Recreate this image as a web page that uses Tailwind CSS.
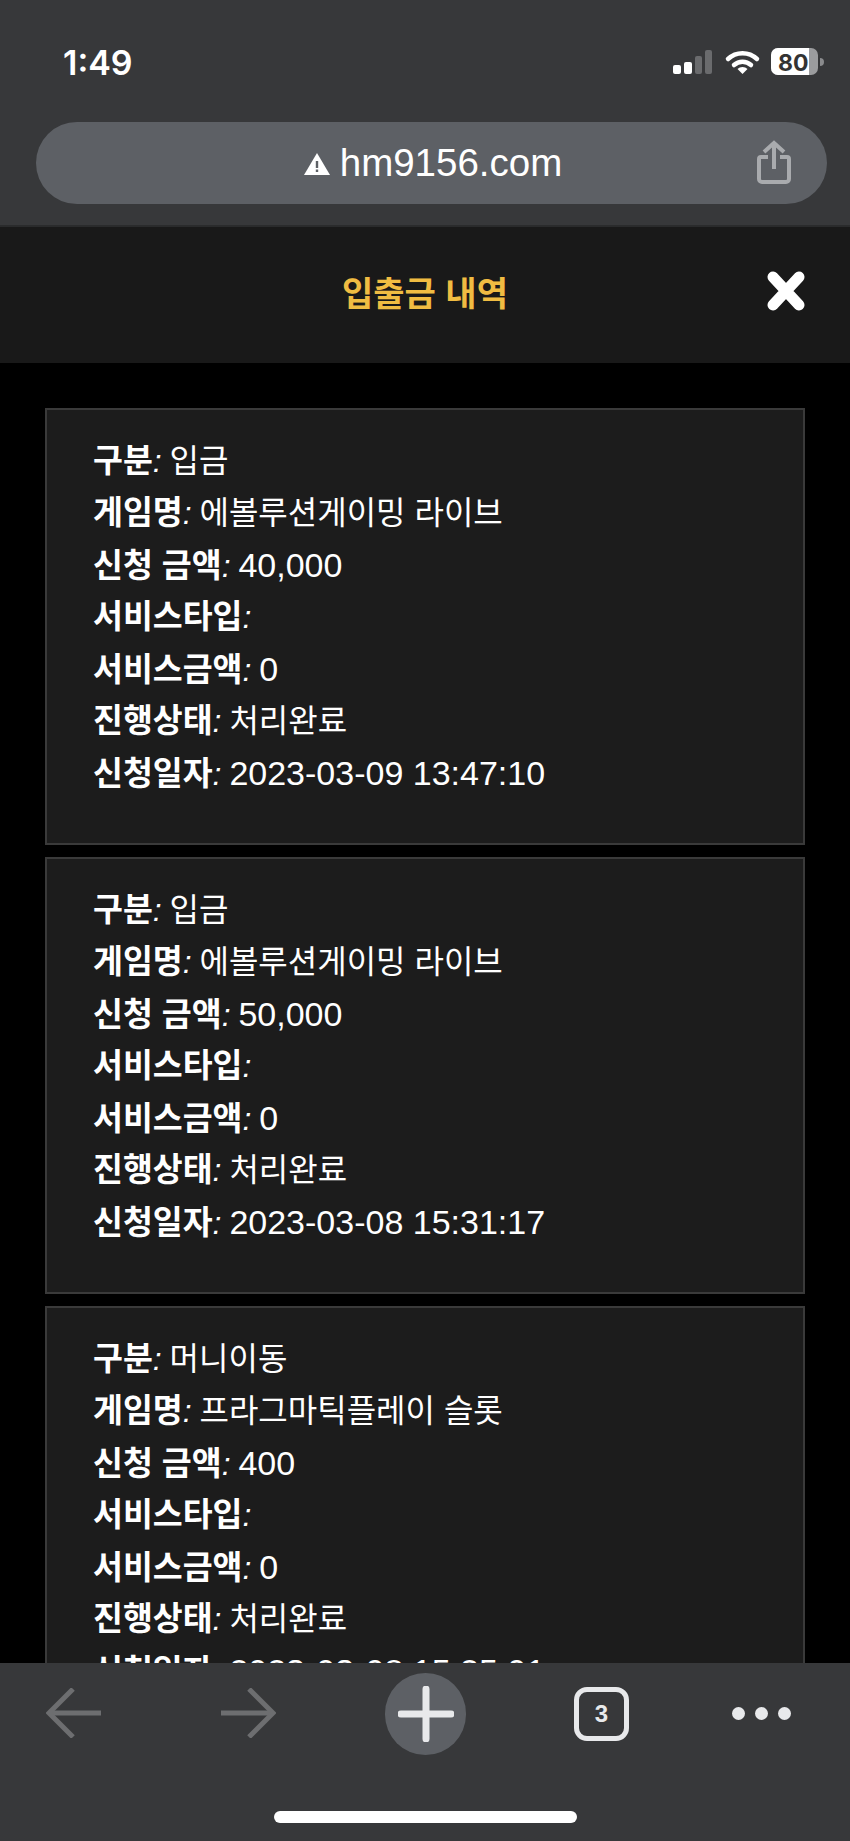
<!DOCTYPE html>
<html lang="ko">
<head>
    <meta charset="UTF-8">
    <meta name="viewport" content="width=device-width, initial-scale=1.0">
    <title>입출금 내역</title>
    <script src="https://cdn.jsdelivr.net/npm/@tailwindcss/browser@4"></script>
</head>
<body class="bg-black text-white font-['Liberation_Sans','Noto_Sans_CJK_KR',sans-serif]">
<div class="w-[850px] h-[1841px] flex flex-col overflow-hidden">

    <!-- Browser top bar -->
    <div class="h-[227px] shrink-0 bg-[#37383a] border-b-2 border-[#2a2b2c] pl-[36px] pr-[23px] relative">
        <div class="h-[122px] flex justify-between items-start">
            <span class="mt-[43px] ml-[27px] font-['Inter'] font-semibold text-[34px] leading-[40px]">1:49</span>
            <svg class="mt-[46px] mr-[2px]" width="154" height="32" viewBox="0 0 154 32">
                <rect x="2" y="19" width="8" height="9" rx="2" fill="#fff"/>
                <rect x="13" y="16" width="8" height="12" rx="2" fill="#fff"/>
                <rect x="24" y="10" width="7" height="18" rx="2" fill="#6a6b6d"/>
                <rect x="34" y="4" width="7" height="24" rx="2" fill="#6a6b6d"/>
                <path d="M57 13 a21 21 0 0 1 29 0" fill="none" stroke="#fff" stroke-width="4.5" stroke-linecap="round"/>
                <path d="M63 19 a12.500 12.500 0 0 1 17 0" fill="none" stroke="#fff" stroke-width="4.500" stroke-linecap="round"/>
                <path d="M66.500 23 a7 7 0 0 1 10 0 L71.500 28 Z" fill="#fff"/>
                <rect x="100" y="2" width="47" height="27" rx="7" fill="#9b9c9e"/>
                <path d="M107 2 H138 V29 H107 a7 7 0 0 1 -7 -7 V9 a7 7 0 0 1 7 -7 Z" fill="#fff"/>
                <path d="M149 12 a4 4 0 0 1 0 8 Z" fill="#8a8b8d"/>
                <text x="107" y="24.500" font-family="Inter" font-weight="700" font-size="23" fill="#333">80</text>
            </svg>
        </div>
        <div class="h-[82px] rounded-full bg-[#5d6065] flex items-center justify-center relative">
            <svg class="ml-[3px] mr-[10px] mt-[2px]" width="26" height="22" viewBox="0 0 26 22">
                <path d="M13 0 L26 22 H0 Z" fill="#fff"/>
                <rect x="11.800" y="8" width="2.400" height="7" fill="#5d6065"/>
                <rect x="11.800" y="16.500" width="2.400" height="2.500" fill="#5d6065"/>
            </svg>
            <span class="text-[38.500px] leading-[48px] text-white">hm9156.com</span>
            <svg class="absolute right-[36px] top-[18px]" width="34" height="44" viewBox="0 0 34 44" fill="none" stroke="#a9abae" stroke-width="4">
                <path d="M17 3 V29"/>
                <path d="M7 12 L17 3 L27 12"/>
                <path d="M11 17 H4 a2 2 0 0 0 -2 2 V39 a3 3 0 0 0 3 3 H29 a3 3 0 0 0 3 -3 V19 a2 2 0 0 0 -2 -2 H23"/>
            </svg>
        </div>
    </div>

    <!-- Page header -->
    <div class="h-[136px] shrink-0 bg-[#191919] flex items-center justify-center relative">
        <h1 class="text-[#f0bc42] text-[34px] font-bold leading-[48px] mt-[-2px]">입출금 내역</h1>
        <svg class="absolute left-[767px] top-[44px]" width="38" height="40" viewBox="0 0 38 40">
            <path d="M6 6 L32 34 M32 6 L6 34" stroke="#fff" stroke-width="11" stroke-linecap="round"/>
        </svg>
    </div>

    <!-- List -->
    <div class="flex-1 overflow-hidden pt-[45px] px-[45px] text-[32px] leading-[52px] [&_p]:h-[52px]">
        <div class="h-[437px] mb-[12px] bg-[#1c1c1c] border-2 border-[#3a3a3a] pl-[46px] pt-[25px]">
            <p><strong class="text-[32.500px]">구분</strong><em class="-mr-[1px]">: </em>입금</p>
            <p><strong class="text-[32.500px]">게임명</strong><em class="-mr-[1px]">: </em>에볼루션게이밍 라이브</p>
            <p><strong class="text-[32.500px]">신청 금액</strong><em class="-mr-[1px]">: </em><span class="text-[34px]">40,000</span></p>
            <p><strong class="text-[32.500px]">서비스타입</strong><em class="-mr-[1px]">: </em></p>
            <p><strong class="text-[32.500px]">서비스금액</strong><em class="-mr-[1px]">: </em><span class="text-[34px]">0</span></p>
            <p><strong class="text-[32.500px]">진행상태</strong><em class="-mr-[1px]">: </em>처리완료</p>
            <p><strong class="text-[32.500px]">신청일자</strong><em class="-mr-[1px]">: </em><span class="text-[34px]">2023-03-09 13:47:10</span></p>
        </div>
        <div class="h-[437px] mb-[12px] bg-[#1c1c1c] border-2 border-[#3a3a3a] pl-[46px] pt-[25px]">
            <p><strong class="text-[32.500px]">구분</strong><em class="-mr-[1px]">: </em>입금</p>
            <p><strong class="text-[32.500px]">게임명</strong><em class="-mr-[1px]">: </em>에볼루션게이밍 라이브</p>
            <p><strong class="text-[32.500px]">신청 금액</strong><em class="-mr-[1px]">: </em><span class="text-[34px]">50,000</span></p>
            <p><strong class="text-[32.500px]">서비스타입</strong><em class="-mr-[1px]">: </em></p>
            <p><strong class="text-[32.500px]">서비스금액</strong><em class="-mr-[1px]">: </em><span class="text-[34px]">0</span></p>
            <p><strong class="text-[32.500px]">진행상태</strong><em class="-mr-[1px]">: </em>처리완료</p>
            <p><strong class="text-[32.500px]">신청일자</strong><em class="-mr-[1px]">: </em><span class="text-[34px]">2023-03-08 15:31:17</span></p>
        </div>
        <div class="h-[437px] bg-[#1c1c1c] border-2 border-[#3a3a3a] pl-[46px] pt-[25px]">
            <p><strong class="text-[32.500px]">구분</strong><em class="-mr-[1px]">: </em>머니이동</p>
            <p><strong class="text-[32.500px]">게임명</strong><em class="-mr-[1px]">: </em>프라그마틱플레이 슬롯</p>
            <p><strong class="text-[32.500px]">신청 금액</strong><em class="-mr-[1px]">: </em><span class="text-[34px]">400</span></p>
            <p><strong class="text-[32.500px]">서비스타입</strong><em class="-mr-[1px]">: </em></p>
            <p><strong class="text-[32.500px]">서비스금액</strong><em class="-mr-[1px]">: </em><span class="text-[34px]">0</span></p>
            <p><strong class="text-[32.500px]">진행상태</strong><em class="-mr-[1px]">: </em>처리완료</p>
            <p><strong class="text-[32.500px]">신청일자</strong><em class="-mr-[1px]">: </em><span class="text-[34px]">2023-03-08 15:25:01</span></p>
        </div>
    </div>

    <!-- Browser bottom bar -->
    <div class="h-[178px] shrink-0 bg-[#37383a] flex flex-col items-center">
        <div class="w-full h-[148px] pl-[46px] pt-[10px] flex items-start">
            <svg class="mt-[15px]" width="55" height="50" viewBox="0 0 55 50" fill="none" stroke="#6d6e70" stroke-width="5">
                <path d="M55 25 H3"/>
                <path d="M27 1 L3 25 L27 49"/>
            </svg>
            <svg class="mt-[15px] ml-[120px]" width="55" height="50" viewBox="0 0 55 50" fill="none" stroke="#6d6e70" stroke-width="5">
                <path d="M0 25 H52"/>
                <path d="M28 1 L52 25 L28 49"/>
            </svg>
            <div class="ml-[109px] w-[81px] h-[82px] rounded-full bg-[#5d6065] flex items-center justify-center">
                <svg width="56" height="56" viewBox="0 0 56 56" stroke="#e8e9eb" stroke-width="7" stroke-linecap="round">
                    <path d="M28 3 V53 M3 28 H53"/>
                </svg>
            </div>
            <div class="ml-[108px] mt-[14px] w-[55px] h-[54px] rounded-[13px] border-[5px] border-[#e8e9eb] flex items-center justify-center font-bold text-[24px] leading-none text-[#e8e9eb]">3</div>
            <div class="ml-[103px] mt-[34px] flex gap-[10px]">
                <span class="w-[13px] h-[13px] rounded-full bg-[#e8e9eb]"></span>
                <span class="w-[13px] h-[13px] rounded-full bg-[#e8e9eb]"></span>
                <span class="w-[13px] h-[13px] rounded-full bg-[#e8e9eb]"></span>
            </div>
        </div>
        <div class="w-[303px] h-[12px] rounded-full bg-white"></div>
    </div>
</div>
</body>
</html>
